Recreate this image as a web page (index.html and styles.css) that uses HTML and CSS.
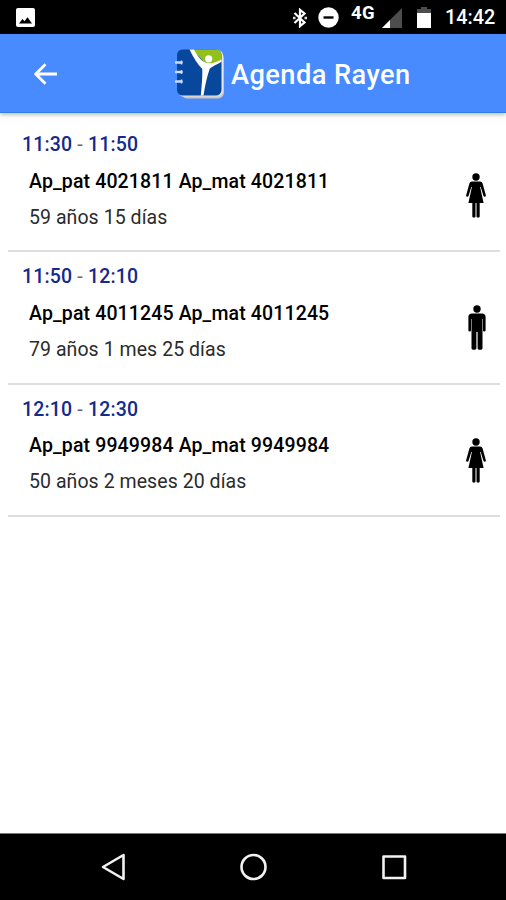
FILE: index.html
```html
<!DOCTYPE html>
<html lang="es">
<head>
    <meta charset="UTF-8">
    <title>Agenda Rayen</title>
    <meta name="viewport" content="width=device-width, initial-scale=1.0">
    <link rel="stylesheet" href="styles.css">
</head>
<body>

    <!-- Shared person icons -->
    <svg class="icon-defs" width="0" height="0">
        <symbol id="woman" viewBox="0 0 20 45">
            <circle cx="10" cy="4" r="3.7"/>
            <path d="M6 8.400h8c1.300 0 2.200.8 2.600 2l3.200 11.600c.5 1.900-1.800 2.500-2.400.7L14.700 14h-.6L17.600 30h-3.900v13.500c0 1.500-3.200 1.500-3.200 0V30h-1v13.500c0 1.500-3.200 1.500-3.200 0V30H2.400L5.900 14h-.6L2.600 22.700c-.6 1.800-2.900 1.200-2.400-.7l3.200-11.600c.4-1.200 1.300-2 2.600-2z"/>
        </symbol>
        <symbol id="man" viewBox="0 0 18 45">
            <circle cx="9" cy="4" r="3.7"/>
            <path d="M4 8.500h10c2.300 0 3.600 1.400 3.600 3.500v13.300c0 1.600-2.600 1.600-2.600 0V14h-.5v29.200c0 2-4.900 2-4.900 0V27H8.400v16.200c0 2-4.900 2-4.900 0V14H3v11.300c0 1.600-2.600 1.600-2.600 0V12c0-2.100 1.300-3.500 3.600-3.500z"/>
        </symbol>
    </svg>

    <div class="status-bar">
        <svg class="photo-icon" viewBox="0 0 19 19" width="19" height="19">
            <rect width="19" height="19" rx="2" fill="#fff"/>
            <path d="M3 15.500l3.500-4.500 2 2.300 3-4 4.500 6.200z" fill="#000"/>
        </svg>
        <div class="status-right">
            <svg class="bluetooth-icon" viewBox="0 0 14 20" width="14" height="20">
                <path d="M1.500 5l10 9.500L7 18.200V1.800l4.500 3.700L1.500 15" fill="none" stroke="#fff" stroke-width="2.200"/>
                <path d="M0 8.800h2.500v2.400H0zM11.500 8.800H14v2.400h-2.500z" fill="#ddd"/>
            </svg>
            <svg class="dnd-icon" viewBox="0 0 21 21" width="21" height="21">
                <circle cx="10.500" cy="10.500" r="10.200" fill="#fff"/>
                <path d="M5.500 9.300h10v2.400h-10z" fill="#000"/>
            </svg>
            <span class="network">4G</span>
            <svg class="signal-icon" viewBox="0 0 20 20" width="20" height="20">
                <path d="M20 0v20H0z" fill="#4d4d4d"/>
                <path d="M8 12v8H0z" fill="#fff"/>
            </svg>
            <svg class="battery-icon" viewBox="0 0 14 21" width="14" height="21">
                <path d="M4 0h6v2h4v4H0V2h4z" fill="#4d4d4d"/>
                <path d="M0 6h14v15H0z" fill="#fff"/>
            </svg>
            <span class="clock">14:42</span>
        </div>
    </div>

    <header>
        <svg class="back-icon" viewBox="0 0 24 22" width="24" height="22">
            <path d="M23 11H2M11.500 1.200L1.700 11l9.800 9.800" fill="none" stroke="#fff" stroke-width="2.800"/>
        </svg>
        <svg class="logo" viewBox="0 0 50 50" width="50" height="50">
            <rect x="6" y="3" width="43" height="46.500" rx="6" fill="#c9c5c2"/>
            <rect x="3" y="1" width="45" height="46.500" rx="5.500" fill="#e9e7e6"/>
            <rect x="2" y="0.500" width="44.500" height="46" rx="5.500" fill="#07489c"/>
            <path d="M17 0.500h24.500c3 0 5 2.500 5 5.500v5L33 17z" fill="#93c11c"/>
            <path d="M14.500 0.500h4.500c2.500 5 6.500 11 12 13.300 5 1.200 10-.3 15.500-3.300v2.300C42 15.500 37.500 17.500 34.800 19.500c-2.800 8-4.800 17-6.300 27h-2.700c1-10 1.700-19 1.500-26.500C22.500 15 18 8 14.500 0.500z" fill="#fff"/>
            <circle cx="33.700" cy="9.800" r="3.600" fill="#fff"/>
            <path d="M1 13.500h5.500M1 23h5.500M1 32.500h5.500" stroke="#c9dcff" stroke-width="2.600" stroke-linecap="round"/>
            <path d="M6.500 11.500v4M6.500 21v4M6.500 30.500v4" stroke="#c9dcff" stroke-width="1.500"/>
        </svg>
        <h1>Agenda Rayen</h1>
    </header>

    <main class="agenda">
        <div class="appointment">
            <div class="details">
                <div class="hours">11:30 <span>-</span> 11:50</div>
                <div class="patient">Ap_pat 4021811 Ap_mat 4021811</div>
                <div class="age">59 años 15 días</div>
            </div>
            <svg class="person woman"><use href="#woman"/></svg>
        </div>
        <div class="appointment">
            <div class="details">
                <div class="hours">11:50 <span>-</span> 12:10</div>
                <div class="patient">Ap_pat 4011245 Ap_mat 4011245</div>
                <div class="age">79 años 1 mes 25 días</div>
            </div>
            <svg class="person man"><use href="#man"/></svg>
        </div>
        <div class="appointment">
            <div class="details">
                <div class="hours">12:10 <span>-</span> 12:30</div>
                <div class="patient">Ap_pat 9949984 Ap_mat 9949984</div>
                <div class="age">50 años 2 meses 20 días</div>
            </div>
            <svg class="person woman"><use href="#woman"/></svg>
        </div>
    </main>

    <nav class="nav-bar">
        <svg viewBox="0 0 28 28" width="28" height="28">
            <path d="M24.500 2v24L4 14z"/>
        </svg>
        <svg viewBox="0 0 28 28" width="28" height="28">
            <circle cx="13.500" cy="14" r="12"/>
        </svg>
        <svg viewBox="0 0 28 28" width="28" height="28">
            <rect x="3.500" y="3.500" width="21.500" height="21.500"/>
        </svg>
    </nav>

</body>
</html>
```
FILE: styles.css
```css
* {
    box-sizing: border-box;
}

body {
    font-family: Roboto, sans-serif;
    margin: 0;
    height: 900px;
    display: flex;
    flex-direction: column;
    background-color: #fff;
    overflow: hidden;
}

svg {
    flex-shrink: 0;
}

.icon-defs {
    position: absolute;
}

.status-bar {
    height: 34px;
    padding: 7px 11px 0 16px;
    background-color: #000;
    color: #fff;
    display: flex;
    justify-content: space-between;
    align-items: flex-start;
}

.photo-icon {
    margin-top: 1px;
}

.status-right {
    display: flex;
    align-items: flex-start;
}

.bluetooth-icon {
    margin: 1px 11px 0 0;
}

.network {
    width: 25px;
    margin: -4px 6px 0 12px;
    font-size: 18.5px;
    line-height: 20px;
    font-weight: 700;
    letter-spacing: 0.5px;
}

.signal-icon {
    margin: 1px 15px 0 0;
}

.clock {
    width: 50px;
    margin-left: 14px;
    font-size: 19.8px;
    line-height: 22px;
    font-weight: 500;
}

header {
    height: 79px;
    padding: 0 34px;
    background-color: #488aff;
    border-bottom: 1px solid #2f7ddf;
    color: white;
    display: flex;
    align-items: center;
    box-shadow: 0 2px 4px rgba(0, 0, 0, 0.25);
}

header h1 {
    margin: 4px 0 0 6px;
    font-size: 27.2px;
    line-height: 32px;
    font-weight: 500;
    letter-spacing: 0.45px;
}

.back-icon {
    margin-top: 1px;
}

.logo {
    margin: 2px 0 0 117px;
}

.agenda {
    flex: 1;
    padding: 7px 6px 0 8px;
}

.appointment {
    height: 132.3px;
    padding: 11px 14px 0 14px;
    border-bottom: 2px solid #dedede;
    display: flex;
    justify-content: space-between;
}

.hours {
    font-size: 19.5px;
    line-height: 28px;
    font-weight: 500;
    letter-spacing: 0.17px;
    color: #142a8c;
}

.hours span {
    font-weight: 400;
    color: #666;
}

.patient {
    margin: 8.5px 0 0 7px;
    font-size: 19.5px;
    line-height: 28px;
    font-weight: 500;
    letter-spacing: 0.13px;
    color: #000;
}

.age {
    margin: 8px 0 0 7px;
    font-size: 19.5px;
    line-height: 28px;
    letter-spacing: 0.06px;
    color: #2b2b2b;
}

.person {
    height: 45px;
    margin-top: 42px;
}

.woman {
    width: 20px;
}

.man {
    width: 18px;
}

.nav-bar {
    height: 67px;
    padding: 0 98px 0 99px;
    background-color: #000;
    border-top: 1px solid #777;
    display: flex;
    justify-content: space-between;
    align-items: center;
}

.nav-bar svg {
    fill: none;
    stroke: #f2f2f2;
    stroke-width: 2.6;
    stroke-linejoin: round;
}
```
